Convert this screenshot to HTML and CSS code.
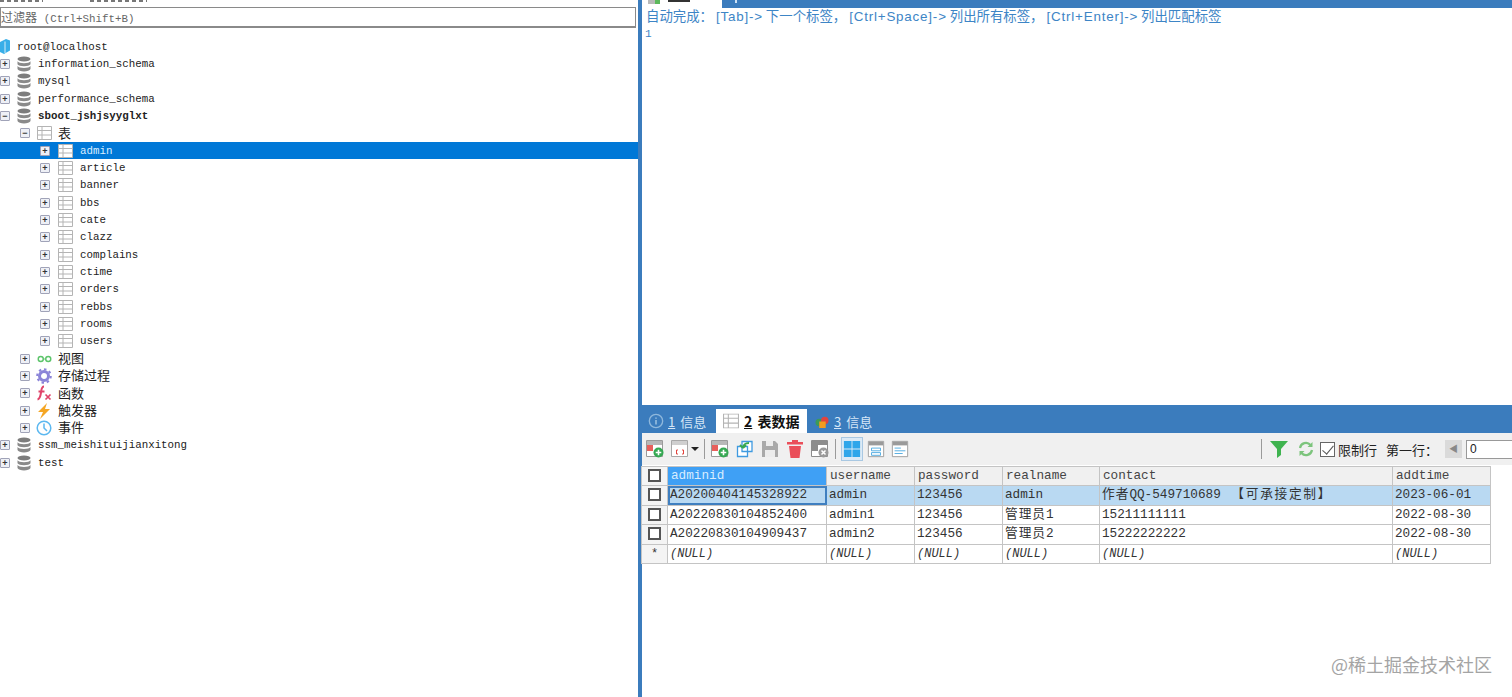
FILE: index.html
```html
<!DOCTYPE html>
<html lang="en">
<head>
    <meta charset="UTF-8">
    <title>SQLyog</title>
    <link rel="stylesheet" href="styles.css">
</head>
<body>
    <svg class="defs" width="0" height="0">
        <symbol id="db" viewBox="0 0 14 16">
            <ellipse cx="7" cy="3" rx="6.5" ry="2.6" fill="#7d7d7d"/>
            <path d="M.5 5.2c1 2.6 12 2.6 13 0v3c-1 2.6-12 2.6-13 0z" fill="#8a8a8a"/>
            <path d="M.5 10c1 2.6 12 2.6 13 0v3c-1 3.2-12 3.2-13 0z" fill="#8a8a8a"/>
        </symbol>
        <symbol id="tbl" viewBox="0 0 15 14">
            <path d="M.5.5h14v13H.5z" fill="#fff" stroke="#b4b4b4"/>
            <path d="M.5 4.5h14M.5 9h14M5 .5v13" stroke="#b4b4b4" fill="none"/>
        </symbol>
        <symbol id="rec-add" viewBox="0 0 20 20">
            <path d="M1.5 1.5h16v16h-16z" fill="#fff" stroke="#9a9a9a"/>
            <path d="M2 2h15v4H2z" fill="#b8b8b8"/>
            <path d="M2 6h6v6H2z" fill="#e8605c"/>
            <circle cx="13.5" cy="13.5" r="5" fill="#35a852"/>
            <path d="M13.5 10.7v5.6M10.7 13.5h5.6" stroke="#fff" stroke-width="1.6"/>
        </symbol>
    </svg>

    <div class="app">
        <aside class="left">
            <div class="cut-title">
                <span class="cut-a"></span>
                <span class="cut-b"></span>
            </div>
            <div class="filter">过滤器 <span class="mono">(Ctrl+Shift+B)</span></div>

            <ul class="tree">
                <li class="row lv-root">
                    <svg class="ic root-ic" viewBox="0 0 10 15"><path d="M0 3l6-3 4 1.500v10L4 15l-4-2z" fill="#38aee8"/><path d="M5 2.500V14" stroke="#fff" stroke-width=".8"/></svg>
                    <span class="label root-label">root@localhost</span>
                </li>
                <li class="row lv0"><span class="exp">+</span><svg class="ic db"><use href="#db"/></svg><span class="label">information_schema</span></li>
                <li class="row lv0"><span class="exp">+</span><svg class="ic db"><use href="#db"/></svg><span class="label">mysql</span></li>
                <li class="row lv0"><span class="exp">+</span><svg class="ic db"><use href="#db"/></svg><span class="label">performance_schema</span></li>
                <li class="row lv0"><span class="exp">−</span><svg class="ic db"><use href="#db"/></svg><span class="label bold">sboot_jshjsyyglxt</span></li>
                <li class="row lv1"><span class="exp">−</span><svg class="ic tb"><use href="#tbl"/></svg><span class="label cjk">表</span></li>
                <li class="row lv2 selected"><span class="exp">+</span><svg class="ic tb"><use href="#tbl"/></svg><span class="label">admin</span></li>
                <li class="row lv2"><span class="exp">+</span><svg class="ic tb"><use href="#tbl"/></svg><span class="label">article</span></li>
                <li class="row lv2"><span class="exp">+</span><svg class="ic tb"><use href="#tbl"/></svg><span class="label">banner</span></li>
                <li class="row lv2"><span class="exp">+</span><svg class="ic tb"><use href="#tbl"/></svg><span class="label">bbs</span></li>
                <li class="row lv2"><span class="exp">+</span><svg class="ic tb"><use href="#tbl"/></svg><span class="label">cate</span></li>
                <li class="row lv2"><span class="exp">+</span><svg class="ic tb"><use href="#tbl"/></svg><span class="label">clazz</span></li>
                <li class="row lv2"><span class="exp">+</span><svg class="ic tb"><use href="#tbl"/></svg><span class="label">complains</span></li>
                <li class="row lv2"><span class="exp">+</span><svg class="ic tb"><use href="#tbl"/></svg><span class="label">ctime</span></li>
                <li class="row lv2"><span class="exp">+</span><svg class="ic tb"><use href="#tbl"/></svg><span class="label">orders</span></li>
                <li class="row lv2"><span class="exp">+</span><svg class="ic tb"><use href="#tbl"/></svg><span class="label">rebbs</span></li>
                <li class="row lv2"><span class="exp">+</span><svg class="ic tb"><use href="#tbl"/></svg><span class="label">rooms</span></li>
                <li class="row lv2"><span class="exp">+</span><svg class="ic tb"><use href="#tbl"/></svg><span class="label">users</span></li>
                <li class="row lv1"><span class="exp">+</span>
                    <svg class="ic tb" viewBox="0 0 16 14"><circle cx="4" cy="7" r="2.700" fill="none" stroke="#5cc46a" stroke-width="1.500"/><circle cx="12" cy="7" r="2.700" fill="none" stroke="#5cc46a" stroke-width="1.500"/><path d="M6.500 7h3" stroke="#5cc46a"/></svg>
                    <span class="label cjk">视图</span></li>
                <li class="row lv1"><span class="exp">+</span>
                    <svg class="ic big" viewBox="0 0 16 16"><circle cx="8" cy="8" r="4.500" fill="none" stroke="#8b84d8" stroke-width="3"/><circle cx="8" cy="8" r="6.800" fill="none" stroke="#8b84d8" stroke-width="2" stroke-dasharray="2.500 2.800"/></svg>
                    <span class="label cjk">存储过程</span></li>
                <li class="row lv1"><span class="exp">+</span>
                    <svg class="ic big" viewBox="0 0 16 16"><path d="M8 1.500C5.500 1.500 5.500 4 5 7.500S4 14 1.500 14.500M2.500 6.500h6" fill="none" stroke="#e0446a" stroke-width="2"/><path d="M9.500 9.500l5 5M14.500 9.500l-5 5" stroke="#e0446a" stroke-width="1.700"/></svg>
                    <span class="label cjk">函数</span></li>
                <li class="row lv1"><span class="exp">+</span>
                    <svg class="ic big" viewBox="0 0 16 16"><path d="M11 0L2 9h5l-3 7 10-10H9z" fill="#f5a623"/></svg>
                    <span class="label cjk">触发器</span></li>
                <li class="row lv1"><span class="exp">+</span>
                    <svg class="ic big" viewBox="0 0 16 16"><circle cx="8" cy="8" r="6.800" fill="#fff" stroke="#5cb8f0" stroke-width="1.500"/><path d="M8 3.500V8l3 3" fill="none" stroke="#5cb8f0" stroke-width="1.500"/></svg>
                    <span class="label cjk">事件</span></li>
                <li class="row lv0"><span class="exp">+</span><svg class="ic db"><use href="#db"/></svg><span class="label">ssm_meishituijianxitong</span></li>
                <li class="row lv0"><span class="exp">+</span><svg class="ic db"><use href="#db"/></svg><span class="label">test</span></li>
            </ul>
        </aside>

        <main class="right">
            <div class="editor-tabs">
                <div class="editor-tab">
                    <span class="tab-icon"></span>
                    <span class="tab-cut"></span>
                </div>
                <span class="tab-dot"></span>
            </div>
            <div class="editor">
                <div class="hint">自动完成： <span class="gap">[Tab]-&gt;</span> 下一个标签， <span class="gap">[Ctrl+Space]-&gt;</span> 列出所有标签， <span class="gap">[Ctrl+Enter]-&gt;</span> 列出匹配标签</div>
                <div class="line-no">1</div>
            </div>

            <div class="results">
                <div class="result-tabs">
                    <div class="rtab">
                        <svg class="rtab-ic" viewBox="0 0 18 18"><circle cx="9" cy="9" r="7.500" fill="none" stroke="#8fb8dc" stroke-width="1.500"/><path d="M9 5v1.500M9 8v5" stroke="#8fb8dc" stroke-width="2"/></svg>
                        <span><u>1</u> 信息</span>
                    </div>
                    <div class="rtab active">
                        <svg class="rtab-ic" viewBox="0 0 15 14"><use href="#tbl"/></svg>
                        <span><u>2</u> 表数据</span>
                    </div>
                    <div class="rtab third">
                        <svg class="rtab-ic small" viewBox="0 0 16 14"><circle cx="5" cy="8" r="4" fill="#3d9a58"/><circle cx="11" cy="6" r="4" fill="#e0443e"/><path d="M5 7h7v7H5z" fill="#f39c1f"/></svg>
                        <span><u>3</u> 信息</span>
                    </div>
                </div>

                <div class="toolbar">
                    <svg class="tool"><use href="#rec-add"/></svg>
                    <svg class="tool" viewBox="0 0 20 20"><path d="M1.500 1.500h16v16h-16z" fill="#fff" stroke="#a8a8a8"/><path d="M2 2h15v4H2z" fill="#cfcfcf"/><path d="M8 11H6.500v4H8M12 11h1.500v4H12" fill="none" stroke="#e0443e"/></svg>
                    <span class="caret"></span>
                    <span class="sep"></span>
                    <svg class="tool"><use href="#rec-add"/></svg>
                    <svg class="tool" viewBox="0 0 20 20"><path d="M7 2.500h10v10H7zM2.500 7.500h10v10h-10z" fill="#fff" stroke="#3f9ae0" stroke-width="1.300"/><path d="M14 4c-4 0-6 2-6 5M8 9l-3-3M8 9l3-3" fill="none" stroke="#37a84f" stroke-width="1.800"/></svg>
                    <svg class="tool" viewBox="0 0 20 20"><path d="M2 2h13l3 3v13H2z" fill="#a9a9a9"/><path d="M6 2h7v5H6zM5 11h10v7H5z" fill="#ececec"/></svg>
                    <svg class="tool" viewBox="0 0 20 20"><path d="M7 1h6v2h5v2.500H2V3h5zM4 7h12l-1.500 12h-9z" fill="#ea4f5a"/></svg>
                    <svg class="tool" viewBox="0 0 20 20"><path d="M1.500 1.500h16v16h-16z" fill="#fff" stroke="#8c8c8c"/><path d="M2 2h15v4H2z" fill="#8c8c8c"/><path d="M2 6h6v6H2z" fill="#8c8c8c"/><circle cx="13.500" cy="13.500" r="5" fill="#9a9a9a"/><path d="M11.500 11.500l4 4M15.500 11.500l-4 4" stroke="#fff" stroke-width="1.500"/></svg>
                    <span class="sep"></span>
                    <span class="view-btn on"><svg viewBox="0 0 20 20" width="18" height="18"><path d="M1 1h8.500v8.500H1zM10.500 1H19v8.500h-8.500zM1 10.500h8.500V19H1zM10.500 10.500H19V19h-8.500z" fill="#2fa6ea"/></svg></span>
                    <span class="view-btn"><svg viewBox="0 0 20 20" width="18" height="18"><path d="M1.500 1.500h17v17h-17z" fill="#fff" stroke="#9a9a9a"/><path d="M2 2h16v4H2z" fill="#9a9a9a"/><path d="M5 9h10v3H5zM5 14h10v3H5z" fill="none" stroke="#4aa8e0"/></svg></span>
                    <span class="view-btn"><svg viewBox="0 0 20 20" width="18" height="18"><path d="M1.500 1.500h17v17h-17z" fill="#fff" stroke="#9a9a9a"/><path d="M2 2h16v4H2z" fill="#9a9a9a"/><path d="M4 9h7M4 12h12M4 15h9" stroke="#4aa8e0"/></svg></span>

                    <div class="tool-right">
                        <span class="sep tall"></span>
                        <svg class="funnel" viewBox="0 0 18 18"><path d="M0 1h18l-7 8v6l-4 3V9z" fill="#3fb34f"/></svg>
                        <svg class="reload" viewBox="0 0 16 16"><path d="M2 7a6 6 0 0 1 10.500-3M14 9a6 6 0 0 1-10.500 3" fill="none" stroke="#7cc47c" stroke-width="2.200"/><path d="M14.500 1v5h-5zM1.500 15v-5h5z" fill="#7cc47c"/></svg>
                        <span class="check on"></span>
                        <span class="tool-text limit">限制行</span>
                        <span class="tool-text first">第一行：</span>
                        <span class="pager">◀</span>
                        <span class="num-input">0</span>
                    </div>
                </div>

                <div class="grid-wrap">
                    <table class="grid">
                        <colgroup>
                            <col class="c0"><col class="c1"><col class="c2"><col class="c3"><col class="c4"><col class="c5"><col class="c6">
                        </colgroup>
                        <thead>
                            <tr>
                                <th><span class="check"></span></th>
                                <th class="col-on">adminid</th>
                                <th>username</th>
                                <th>password</th>
                                <th>realname</th>
                                <th>contact</th>
                                <th>addtime</th>
                            </tr>
                        </thead>
                        <tbody>
                            <tr class="row-on">
                                <td class="mark"><span class="check"></span></td>
                                <td class="cell-on">A20200404145328922</td>
                                <td>admin</td><td>123456</td><td>admin</td>
                                <td><span class="zh">作者</span>QQ-549710689 <span class="zh wide">【可承接定制】</span></td><td>2023-06-01</td>
                            </tr>
                            <tr>
                                <td class="mark"><span class="check"></span></td>
                                <td>A20220830104852400</td>
                                <td>admin1</td><td>123456</td><td><span class="zh">管理员</span>1</td>
                                <td>15211111111</td><td>2022-08-30</td>
                            </tr>
                            <tr>
                                <td class="mark"><span class="check"></span></td>
                                <td>A20220830104909437</td>
                                <td>admin2</td><td>123456</td><td><span class="zh">管理员</span>2</td>
                                <td>15222222222</td><td>2022-08-30</td>
                            </tr>
                            <tr class="new-row">
                                <td class="mark">*</td>
                                <td>(NULL)</td><td>(NULL)</td><td>(NULL)</td><td>(NULL)</td><td>(NULL)</td><td>(NULL)</td>
                            </tr>
                        </tbody>
                    </table>
                    <div class="watermark">@稀土掘金技术社区</div>
                </div>
            </div>
        </main>
    </div>
</body>
</html>
```

FILE: styles.css
```css
* {
    box-sizing: border-box;
}

html, body {
    margin: 0;
    height: 100%;
    overflow: hidden;
    background: #fff;
}

body {
    font-family: "Liberation Mono", "Noto Sans CJK SC", monospace;
    color: #222;
}

.defs {
    position: absolute;
}

.app {
    display: flex;
    height: 697px;
}

/* left pane */
.left {
    width: 638px;
    flex: none;
    overflow: hidden;
}

/* bottom edge of the text above, only a sliver of it is in view */
.cut-title {
    height: 7px;
    display: flex;
    gap: 47px;
}

.cut-title span {
    display: block;
    height: 2px;
    background: repeating-linear-gradient(90deg, #777 0 4px, transparent 4px 7px);
}

.cut-a {
    width: 43px;
}

.cut-b {
    width: 57px;
}

.filter {
    width: 636px;
    height: 21px;
    border: 1px solid #8a8a8a;
    border-width: 1px 1px 2px 1px;
    font-family: "Noto Sans CJK SC", sans-serif;
    font-size: 12px;
    line-height: 17px;
    color: #666;
    margin-bottom: 10px;
    white-space: nowrap;
}

.mono {
    font-family: "Liberation Mono", monospace;
    font-size: 10.800px;
    margin-left: 4px;
}

.tree {
    list-style: none;
    margin: 0;
    padding: 0;
}

.row {
    height: 17.330px;
    display: flex;
    align-items: center;
    font-size: 10.800px;
    white-space: nowrap;
}

.lv-root { padding-left: 0; }
.lv0 { padding-left: 0; }
.lv1 { padding-left: 20px; }
.lv2 { padding-left: 40px; }

.exp {
    width: 10px;
    height: 10px;
    flex: none;
    border: 1px solid #a0a3b8;
    border-radius: 1px;
    background: #eef0f6;
    color: #333;
    font-size: 9px;
    line-height: 8px;
    text-align: center;
    font-family: "Liberation Sans", sans-serif;
    font-weight: bold;
}

.ic {
    flex: none;
}

.root-ic {
    width: 10px;
    height: 15px;
}

.root-label {
    margin-left: 7px;
}

.ic.db {
    width: 14px;
    height: 16px;
    margin-left: 7px;
    margin-right: 7px;
}

.ic.tb {
    width: 15px;
    height: 14px;
    margin-left: 7px;
    margin-right: 6px;
}

.ic.big {
    width: 16px;
    height: 16px;
    margin-left: 6px;
    margin-right: 6px;
}

.lv2 .ic.tb {
    margin-left: 8px;
    margin-right: 7px;
}

.bold {
    font-weight: bold;
}

.cjk {
    font-family: "Noto Sans CJK SC", sans-serif;
    font-size: 13px;
    margin-top: -2px;
}

.selected {
    background: #0078d7;
    color: #dbeeff;
}

/* right pane */
.right {
    flex: 1;
    min-width: 0;
    display: flex;
    flex-direction: column;
    border-left: 4px solid #3b7cbd;
}

.editor-tabs {
    height: 8px;
    flex: none;
    background: #3b7cbd;
    display: flex;
    overflow: hidden;
}

.editor-tab {
    width: 80px;
    background: #fff;
    display: flex;
    align-items: flex-start;
    gap: 8px;
    padding-left: 6px;
}

.tab-icon {
    width: 12px;
    height: 4px;
    background: linear-gradient(90deg, #b9b9b9 60%, #5cb85c 60%);
}

.tab-cut {
    width: 22px;
    height: 2px;
    background: #333;
}

.tab-dot {
    width: 2px;
    height: 3px;
    margin-left: 13px;
    background: #cfe2f5;
}

.editor {
    height: 397px;
    flex: none;
    padding: 0 0 0 4px;
    color: #3d85c6;
}

.hint {
    font-family: "Noto Sans CJK SC", sans-serif;
    font-size: 13.400px;
    line-height: 14px;
    white-space: nowrap;
}

.gap {
    font-family: "Liberation Sans", sans-serif;
    letter-spacing: 0.8px;
}

.line-no {
    font-size: 11px;
    line-height: 16px;
    margin-left: -1px;
    padding-top: 2px;
}

.results {
    flex: 1;
    min-height: 0;
    display: flex;
    flex-direction: column;
}

.result-tabs {
    height: 28px;
    flex: none;
    background: #3b7cbd;
    padding: 4px 0 0 6px;
    display: flex;
    font-family: "Noto Sans CJK SC", sans-serif;
    font-size: 13px;
    color: #d5e6f7;
}

.rtab {
    display: flex;
    align-items: center;
    gap: 4px;
    width: 68px;
    white-space: pre;
    word-spacing: 2px;
}

.rtab.active {
    width: 91px;
    background: #fff;
    color: #111;
    font-weight: bold;
    font-size: 14px;
    padding-left: 7px;
    gap: 5px;
}

.rtab.third {
    padding-left: 7px;
    width: 80px;
}

.rtab-ic {
    width: 16px;
    height: 16px;
    flex: none;
}

.rtab-ic.small {
    height: 13px;
}

.toolbar {
    height: 32px;
    flex: none;
    background: #f0f0f0;
    display: flex;
    align-items: center;
    padding-left: 3px;
    gap: 5px;
}

.tool {
    width: 20px;
    height: 20px;
    flex: none;
}

.caret {
    width: 0;
    height: 0;
    border: 4px solid transparent;
    border-top: 4px solid #222;
    border-bottom: 0;
    margin-left: -4px;
}

.sep {
    width: 1px;
    height: 20px;
    background: #9a9a9a;
    flex: none;
}

.view-btn {
    width: 22px;
    height: 24px;
    display: flex;
    align-items: center;
    justify-content: center;
    flex: none;
    margin-left: -3px;
}

.view-btn.on {
    background: #dceaf6;
    border: 1px solid #a9c8e2;
    margin-left: 0;
}

.tool-right {
    margin-left: auto;
    display: flex;
    align-items: center;
    gap: 6px;
    font-family: "Noto Sans CJK SC", sans-serif;
    font-size: 13px;
}

.sep.tall {
    margin-right: 2px;
}

.funnel {
    width: 18px;
    height: 18px;
}

.reload {
    width: 16px;
    height: 16px;
    margin-left: 4px;
}

.limit {
    margin-left: -3px;
}

.first {
    margin-left: 3px;
}

.pager {
    width: 17px;
    height: 18px;
    background: #dadada;
    color: #888;
    font-size: 9px;
    line-height: 18px;
    text-align: center;
    margin-left: 1px;
}

.num-input {
    width: 46px;
    height: 19px;
    background: #fff;
    border: 1px solid #999;
    border-right: 0;
    font-family: "Liberation Sans", sans-serif;
    font-size: 12px;
    line-height: 17px;
    padding-left: 3px;
    margin-left: -2px;
}

.check {
    display: inline-block;
    width: 13px;
    height: 13px;
    border: 2px solid #555;
    background: #fff;
    vertical-align: middle;
}

.check.on {
    width: 15px;
    height: 15px;
    border: 1px solid #666;
    position: relative;
}

.check.on::after {
    content: '';
    position: absolute;
    left: 4px;
    top: 0;
    width: 5px;
    height: 10px;
    border: solid #555;
    border-width: 0 1px 1px 0;
    transform: rotate(40deg);
}

/* result grid */
.grid-wrap {
    flex: 1;
    min-height: 0;
    position: relative;
}

.grid {
    border-collapse: collapse;
    table-layout: fixed;
    width: 849px;
    margin: 1px 0 0 -1px;
    font-size: 12.700px;
    line-height: 14px;
}

.c0 { width: 26px; }
.c1 { width: 159px; }
.c2 { width: 88px; }
.c3 { width: 88px; }
.c4 { width: 97px; }
.c5 { width: 293px; }
.c6 { width: 98px; }

.grid th, .grid td {
    border: 1px solid #c4c4c4;
    height: 19.500px;
    padding: 0 2px;
    font-weight: normal;
    text-align: left;
    white-space: nowrap;
    overflow: hidden;
    color: #333;
}

.grid th {
    background: #f0f0f0;
    height: 19px;
    padding-left: 3px;
    color: #444;
}

.grid th:first-child, .grid td.mark {
    text-align: center;
    background: #f4f4f4;
    padding: 0;
}

.grid th.col-on {
    background: #3fa0f5;
    color: #d8edff;
}

.row-on td {
    background: #b9d9f2;
}

.grid td.cell-on {
    background: #b9d9f2;
    outline: 2px solid #3f7fc0;
    outline-offset: -2px;
}

.zh {
    letter-spacing: 1px;
    line-height: 14px;
}

.zh.wide {
    margin-left: 3px;
    letter-spacing: 1.7px;
}

.new-row td {
    font-style: italic;
    font-size: 12px;
}

.new-row td.mark {
    font-style: normal;
}

.watermark {
    position: absolute;
    right: 20px;
    bottom: 20px;
    font-family: "Noto Sans CJK SC", sans-serif;
    font-size: 18px;
    color: #a4a4a4;
}
```
